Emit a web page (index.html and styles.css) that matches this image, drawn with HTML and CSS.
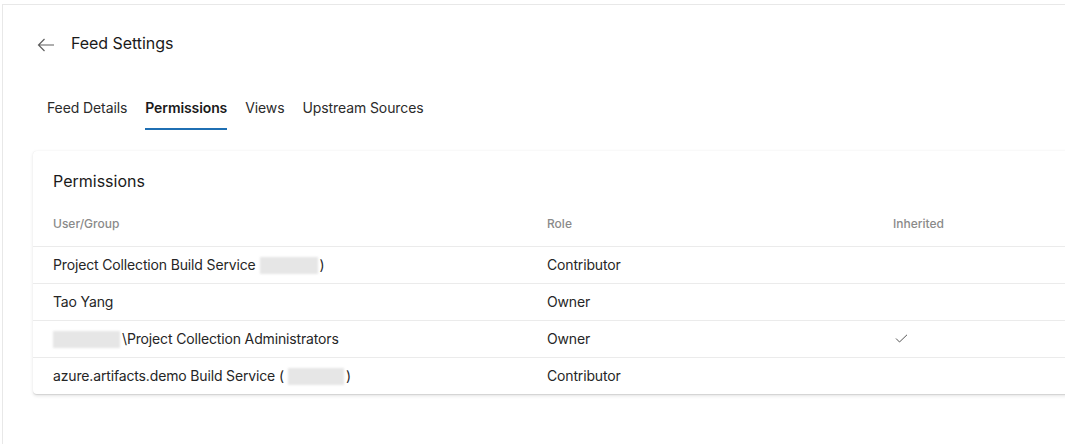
FILE: index.html
```html
<!DOCTYPE html>
<html lang="en">
<head>
<meta charset="utf-8">
<title>Feed Settings</title>
<link rel="stylesheet" href="styles.css">
</head>
<body>
<div class="frame">
  <div class="page-header">
    <span class="back">
      <svg width="18" height="14" viewBox="0 0 18 14"><path d="M17 7H1.5M7.5 1L1.5 7l6 6" fill="none" stroke="#5f5f5f" stroke-width="1.2"/></svg>
    </span>
    <h1 class="title">Feed Settings</h1>
  </div>
  <nav class="tabs">
    <span class="tab">Feed Details</span>
    <span class="tab active">Permissions</span>
    <span class="tab">Views</span>
    <span class="tab">Upstream Sources</span>
  </nav>
  <section class="card">
    <h2 class="card-title">Permissions</h2>
    <div class="row head">
      <span>User/Group</span><span>Role</span><span>Inherited</span>
    </div>
    <div class="row">
      <span>Project Collection Build Service <i class="blur w61"></i>)</span><span>Contributor</span><span></span>
    </div>
    <div class="row">
      <span>Tao Yang</span><span>Owner</span><span></span>
    </div>
    <div class="row">
      <span><i class="blur w67 nomargin"></i>\Project Collection Administrators</span><span>Owner</span>
      <span><svg class="check" width="13" height="9" viewBox="0 0 13 9"><path d="M1 4.5l3.5 3.5L12 0.8" fill="none" stroke="#555" stroke-width="1"/></svg></span>
    </div>
    <div class="row last">
      <span>azure.artifacts.demo Build Service (<i class="blur w56"></i>)</span><span>Contributor</span><span></span>
    </div>
  </section>
</div>
</body>
</html>
```

FILE: styles.css
```css
html, body {
  margin: 0;
  padding: 0;
  background: #ffffff;
  overflow: hidden;
}
body {
  font-family: Inter, "Noto Sans", "Liberation Sans", sans-serif;
  color: #1f1f1f;
  width: 1065px;
  height: 444px;
}
.frame {
  margin: 4px 0 0 2px;
  height: 440px;
  box-sizing: border-box;
  border-top: 1px solid #e8e8e8;
  border-left: 1px solid #e8e8e8;
  padding: 26px 0 0 30px;
  overflow: hidden;
}
.page-header {
  display: flex;
  align-items: center;
  height: 24px;
  margin-left: 4px;
}
.back {
  display: flex;
  width: 34px;
  padding-top: 3px;
}
.title {
  margin: 0;
  font-size: 16px;
  font-weight: 400;
  line-height: 24px;
  color: #1a1a1a;
  letter-spacing: -0.05px;
}
.tabs {
  display: flex;
  gap: 18px;
  margin-top: 43px;
  padding-left: 14px;
}
.tab {
  font-size: 14px;
  line-height: 20px;
  padding-bottom: 10px;
  border-bottom: 2px solid transparent;
  color: #2b2b2b;
  letter-spacing: -0.1px;
}
.tab.active {
  font-weight: 600;
  border-bottom-color: #1f6fb3;
  color: #1a1a1a;
  letter-spacing: -0.1px;
}
.card {
  margin-top: 21px;
  width: 1040px;
  margin-right: -20px;
  background: #fff;
  border-radius: 4px 0 0 4px;
  box-shadow: 0 1.6px 3.6px rgba(0,0,0,0.11), 0 0.3px 0.9px rgba(0,0,0,0.09);
  padding-top: 18px;
}
.card-title {
  margin: 0 0 23px 20px;
  font-size: 16px;
  font-weight: 400;
  line-height: 24px;
  color: #1a1a1a;
}
.row {
  display: grid;
  grid-template-columns: 494px 346px 1fr;
  padding-left: 20px;
  font-size: 14px;
  line-height: 36px;
  color: #262626;
  border-bottom: 1px solid #ebebeb;
  letter-spacing: -0.15px;
}
.row.head {
  font-size: 12px;
  line-height: 16px;
  padding-bottom: 14px;
  color: #8a8a8a;
  font-weight: 500;
  letter-spacing: 0;
}
.row.last {
  border-bottom: none;
}
.row span {
  display: flex;
  align-items: center;
}
.blur {
  display: inline-block;
  height: 17px;
  background: #e6e6e6;
  filter: blur(1.2px);
  margin: 0 2px 0 4px;
}
.blur.nomargin { margin-left: 0; }
.w61 { width: 58px; }
.w67 { width: 67px; }
.w56 { width: 56px; }
.check { margin-left: 2px; margin-top: -2px; }
```
